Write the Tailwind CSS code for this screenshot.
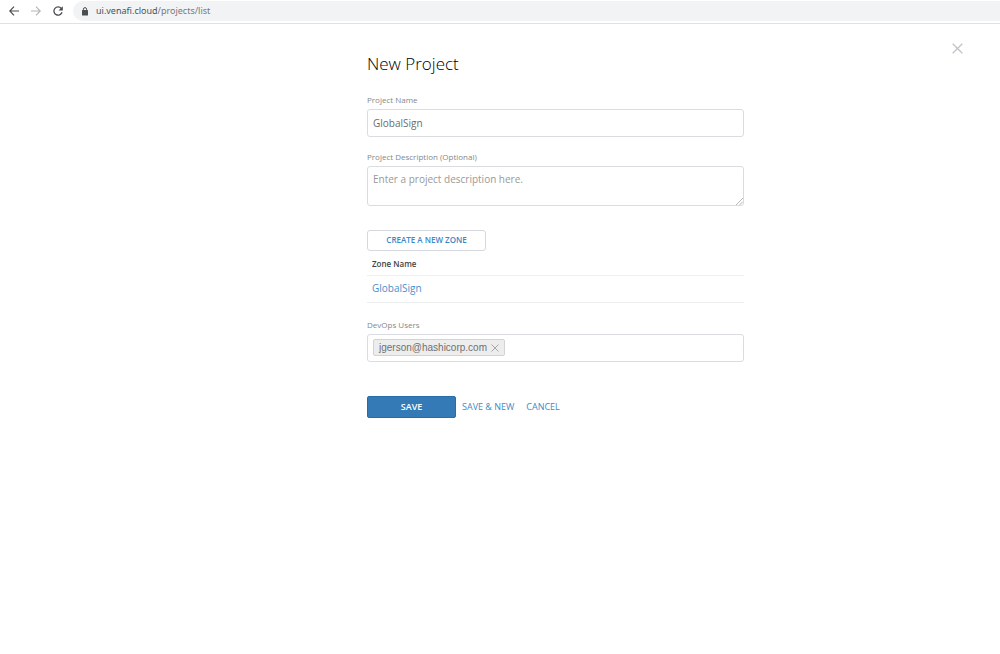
<!DOCTYPE html>
<html lang="en">
<head>
<meta charset="utf-8">
<meta name="viewport" content="width=device-width, initial-scale=1">
<title>New Project</title>
<script src="https://cdn.jsdelivr.net/npm/@tailwindcss/browser@4"></script>
</head>
<body class="min-h-screen bg-white font-['Open_Sans',sans-serif] text-[10px] text-[#6b6b6b]">
<header class="flex h-6 items-start border-b border-[#dfe1e3] text-[#4a4d51]">
  <nav class="flex h-[22px] items-center gap-3 pl-[9px]" aria-label="Browser">
    <button type="button" aria-label="Back"><svg class="size-[10px]" viewBox="0 0 10 10" fill="none" stroke="currentColor" stroke-width="1.2"><path d="M10 5H1M5 .7.8 5 5 9.3"/></svg></button>
    <button type="button" aria-label="Forward" class="text-[#b4b6b8]"><svg class="size-[10px]" viewBox="0 0 10 10" fill="none" stroke="currentColor" stroke-width="1.2"><path d="M0 5h9M5 .7 9.2 5 5 9.3"/></svg></button>
    <button type="button" aria-label="Reload"><svg class="size-[10px]" viewBox="0 0 10 10" fill="none"><path d="M8.3 2.5A4.1 4.1 0 1 0 9 6.2" stroke="currentColor" stroke-width="1.3"/><path d="M9.8.2v4.3H5.5z" fill="currentColor"/></svg></button>
  </nav>
  <div class="mt-px ml-[10px] flex h-5 flex-1 items-center gap-2 rounded-l-full bg-[#f1f3f4] pl-[9px]">
    <svg class="h-[9px] w-[6px]" viewBox="0 0 6 9" fill="none"><rect y="3" width="6" height="5.5" rx=".6" fill="#4a4d51"/><path d="M1.4 3.5V2.2a1.6 1.6 0 0 1 3.2 0v1.3" stroke="#4a4d51"/></svg>
    <span class="font-['Noto_Sans',sans-serif] text-[9px] leading-4 text-[#4f5255]">ui.venafi.cloud<span class="text-[#777a7d]">/projects/list</span></span>
  </div>
</header>
<main class="grid grid-cols-[367fr_377fr_256fr]">
  <form class="col-start-2 flex flex-col pt-7">
    <h1 class="text-[17px] leading-6 font-light text-black">New Project</h1>
    <label for="name" class="mt-[18px] text-[8px] leading-3 text-[#85878a]">Project Name</label>
    <input id="name" value="GlobalSign" class="mt-[3px] h-7 rounded-[3px] border border-[#dadce1] px-[5px] text-[#6b6b6b]">
    <label for="desc" class="mt-[14px] text-[8px] leading-3 text-[#85878a]">Project Description (Optional)</label>
    <div class="relative mt-[3px] flex">
      <textarea id="desc" placeholder="Enter a project description here." class="h-10 w-full resize-none rounded-[3px] border border-[#dadce1] px-[5px] pt-[5px] leading-[14px] placeholder:text-[#999]"></textarea>
      <svg class="pointer-events-none absolute right-px bottom-px size-[7px]" viewBox="0 0 7 7" stroke="#a3a5a8" stroke-width=".8"><path d="M0 7l7-7M3.5 7 7 3.5"/></svg>
    </div>
    <button type="button" class="mt-6 h-[21px] w-[119px] rounded-[3px] border border-[#d5d9df] pb-0.5 text-[8px] leading-3 font-semibold text-[#3b87c8]">CREATE A NEW ZONE</button>
    <table class="w-full text-left">
      <thead><tr class="h-6 border-b border-[#eceef0]"><th class="pt-0.5 pl-[5px] text-[8px] leading-3 font-semibold text-[#444]">Zone Name</th></tr></thead>
      <tbody><tr class="h-[27px] border-b border-[#eceef0]"><td class="pb-px pl-[5px] leading-[14px]"><a href="#" class="text-[#4a8fcb]">GlobalSign</a></td></tr></tbody>
    </table>
    <label for="users" class="mt-4 text-[8px] leading-3 text-[#85878a]">DevOps Users</label>
    <div class="mt-[3px] flex h-7 items-center rounded-[3px] border border-[#dadce1] px-[5px]">
      <span class="flex h-[17px] items-center gap-1 rounded-xs border border-[#d2d3d5] bg-[#ededed] px-[5px] font-['Liberation_Sans',sans-serif] text-[10px] leading-3 text-[#707070]">jgerson@hashicorp.com
        <button type="button" aria-label="Remove jgerson@hashicorp.com"><svg class="size-2" viewBox="0 0 8 8" stroke="#a5a7aa"><path d="m.5.5 7 7m0-7-7 7"/></svg></button></span>
      <input id="users" class="min-w-0 flex-1 outline-none">
    </div>
    <div class="mt-[34px] flex items-center text-[9px] leading-3 text-[#4189c7]">
      <button type="submit" class="h-[22px] w-[89px] rounded-xs border border-[#286da8] bg-[#337ab7] font-semibold text-white">SAVE</button>
      <button type="button" class="ml-[6px]">SAVE &amp; NEW</button>
      <button type="button" class="ml-3">CANCEL</button>
    </div>
  </form>
  <button type="button" aria-label="Close" class="mt-[19px] mr-[37px] self-start justify-self-end"><svg class="size-[11px]" viewBox="0 0 11 11" stroke="#bfc2c9" stroke-width="1.3"><path d="m.7.7 9.6 9.6m0-9.6L.7 10.3"/></svg></button>
</main>
</body>
</html>
